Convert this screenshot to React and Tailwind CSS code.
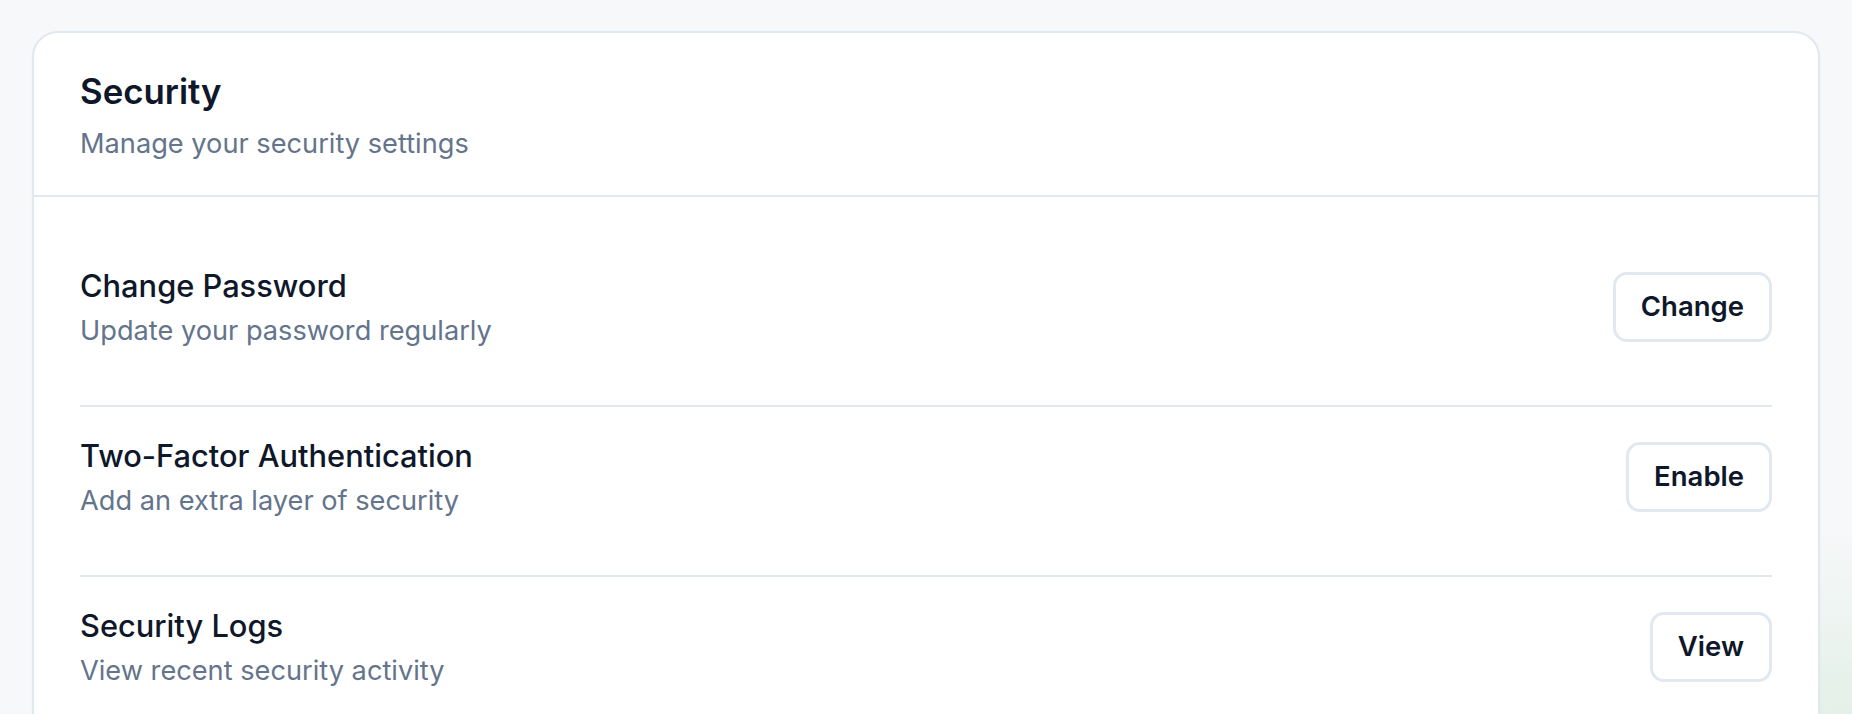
import React from "react";

const rows = [
  { title: "Change Password", desc: "Update your password regularly", action: "Change" },
  { title: "Two-Factor Authentication", desc: "Add an extra layer of security", action: "Enable" },
  { title: "Security Logs", desc: "View recent security activity", action: "View" },
];

export default function App() {
  return (
    <div className="h-[714px] w-full overflow-hidden bg-[#f7f8f9] bg-[radial-gradient(ellipse_at_100%_100%,#e3f0e8_0%,transparent_18%)] px-[32px] pt-[31px] font-['Inter','Noto_Sans',sans-serif]">
      <div className="rounded-[26px] border-2 border-[#e2e8f0] bg-white shadow-[0_1px_3px_rgba(15,23,42,0.04)]">
        <div className="border-b-2 border-[#e2e8f0] px-[46px] pt-[41px] pb-[30px]">
          <h2 className="text-[34.8px] font-semibold leading-none text-[#0f172a]">Security</h2>
          <p className="mt-[14px] text-[27.2px] leading-[42px] text-[#64748b]">Manage your security settings</p>
        </div>
        <div className="px-[46px] pt-[40px]">
          {rows.map((r, i) => (
            <div
              key={r.title}
              className={
                i === 0
                  ? "flex items-center justify-between pt-[25px] pb-[53px]"
                  : "flex items-center justify-between border-t-2 border-[#e2e8f0] pt-[25px] pb-[53px]"
              }
            >
              <div className="flex flex-col">
                <span className="text-[30.8px] font-medium leading-[48px] text-[#0f172a]">{r.title}</span>
                <span className="text-[27.2px] leading-[42px] text-[#64748b]">{r.desc}</span>
              </div>
              <button className="flex h-[70px] items-center rounded-[14px] border-[3px] border-[#e2e8f0] bg-white px-[25px] text-[27.5px] font-semibold text-[#0f172a]">
                {r.action}
              </button>
            </div>
          ))}
        </div>
      </div>
    </div>
  );
}
